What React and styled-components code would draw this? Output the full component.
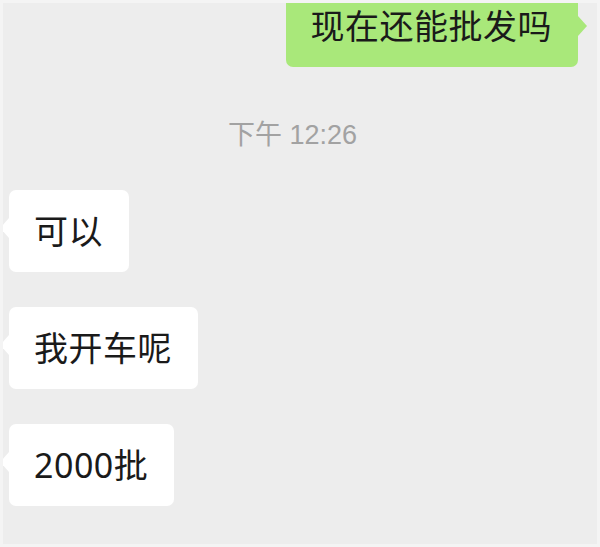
import React from "react";
import styled, { createGlobalStyle } from "styled-components";

const GlobalStyle = createGlobalStyle`
    html, body {
        margin: 0;
        padding: 0;
        background: #ededed;
    }
    * {
        box-sizing: border-box;
    }
`;

const messages = [
    { id: 1, side: "right", text: "现在还能批发吗" },
    { id: 2, type: "time", text: "下午 12:26" },
    { id: 3, side: "left", text: "可以" },
    { id: 4, side: "left", text: "我开车呢" },
    { id: 5, side: "left", text: "2000批" },
];

const App = () => {
    return (
        <>
            <GlobalStyle />
            <Frame>
                <Chat>
                    {messages.map((m) =>
                        m.type === "time" ? (
                            <TimeStamp key={m.id}>{m.text}</TimeStamp>
                        ) : (
                            <Row key={m.id} side={m.side}>
                                <Bubble side={m.side}>{m.text}</Bubble>
                            </Row>
                        )
                    )}
                </Chat>
            </Frame>
        </>
    );
};

const Frame = styled.div`
    width: 600px;
    height: 547px;
    overflow: hidden;
    background: #ededed;
    border: 3px solid #f4f4f4;
    font-family: "Noto Sans", "Noto Sans CJK SC", sans-serif;
`;

const Chat = styled.div`
    display: flex;
    flex-direction: column;
    margin-top: -18px;
    padding: 0 19px 0 6px;
`;

const Row = styled.div`
    display: flex;
    justify-content: ${(p) => (p.side === "right" ? "flex-end" : "flex-start")};
    margin-bottom: 35px;
    &:first-child {
        margin-bottom: 0;
    }
`;

const Bubble = styled.div`
    position: relative;
    background: ${(p) => (p.side === "right" ? "#a9e87a" : "#ffffff")};
    color: #1a1a1a;
    font-size: 34px;
    line-height: 34px;
    letter-spacing: 0.5px;
    padding: 24px 26px 24px 25px;
    border-radius: 7px;
    &::before {
        content: "";
        position: absolute;
        top: ${(p) => (p.side === "right" ? "31px" : "28px")};
        ${(p) => (p.side === "right" ? "right: -9px;" : "left: -9px;")}
        border-top: 10px solid transparent;
        border-bottom: 10px solid transparent;
        ${(p) =>
            p.side === "right"
                ? "border-left: 9px solid #a9e87a;"
                : "border-right: 9px solid #ffffff;"}
    }
`;

const TimeStamp = styled.div`
    align-self: center;
    margin: 48px 0 35px -2px;
    font-family: "Liberation Sans", "Noto Sans CJK SC", sans-serif;
    font-size: 27px;
    line-height: 40px;
    color: #a2a2a2;
`;

export default App;
